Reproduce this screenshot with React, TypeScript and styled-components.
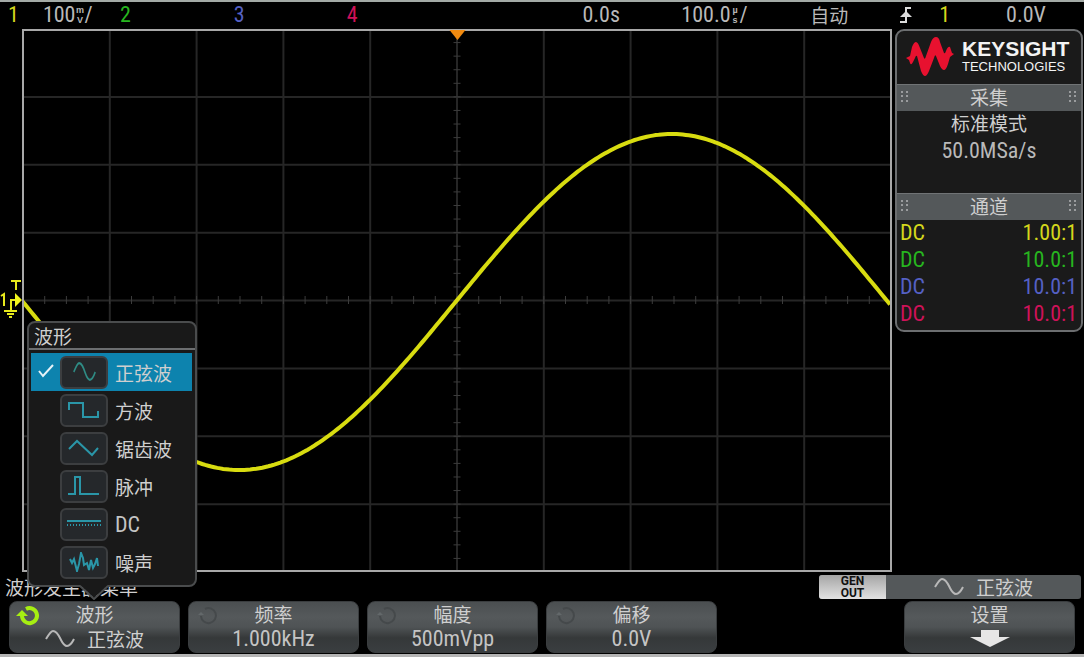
import React from 'react';
import styled, { createGlobalStyle } from 'styled-components';

const Global = createGlobalStyle`
  * { box-sizing: border-box; }
  body { margin: 0; background: #000; }
  button { font: inherit; color: inherit; cursor: pointer; }
`;

const YELLOW = '#d4d71c';
const GREEN = '#27b51f';
const BLUE = '#5560c4';
const PINK = '#cf1259';
const TEAL = '#2a96a8';

const Screen = styled.div`
  display: flex;
  flex-direction: column;
  height: 100vh;
  min-height: 600px;
  border-top: 2px solid #a3aaa6;
  border-bottom: 3px solid #b4b4b4;
  background: #000;
  color: #b9b9b9;
  font: 400 22px/25px 'Roboto Condensed', 'Noto Sans CJK SC', sans-serif;
`;

const Han = styled.span<{ $color?: string }>`
  font: 400 19px/23px 'Noto Sans CJK SC', sans-serif;
  color: ${(p) => p.$color ?? '#cfcfcf'};
  white-space: nowrap;
`;

const StatusBar = styled.header`
  display: grid;
  grid-template-columns: 112fr 114fr 113fr 236fr 99fr 129fr 90fr 184fr;
  align-items: center;
  height: 27px;
  padding: 0 0 6px 8px;
`;

const Cell = styled.div<{ $gap?: number }>`
  display: flex;
  align-items: center;
  gap: ${(p) => p.$gap ?? 0}px;
  min-width: 0;
`;

const Tint = styled.span<{ $color: string }>`
  color: ${(p) => p.$color};
`;

const Value = styled.span`
  display: flex;
  align-items: center;
  white-space: nowrap;
`;

const Unit = styled.span`
  display: flex;
  flex-direction: column;
  align-items: center;
  width: 9px;
  font: bold 9px/10px 'Liberation Sans', sans-serif;
`;

const Main = styled.main`
  display: flex;
  flex: 1 1 0;
  min-height: 0;
`;

const Gutter = styled.div`
  display: flex;
  align-items: center;
  width: 22px;
`;

const Plot = styled.svg`
  flex: 1;
  min-width: 0;
  height: auto;
`;

const Side = styled.aside`
  align-self: flex-start;
  width: 188px;
  margin: 0 1px 0 3px;
  border: 2px solid #6c6e70;
  border-radius: 9px;
  background: #1a1a1a;
  overflow: hidden;
`;

const Brand = styled.div`
  display: flex;
  align-items: center;
  gap: 8px;
  height: 53px;
  padding: 0 0 3px 9px;
  color: #f4f4f4;
`;

const BrandText = styled.div`
  display: flex;
  flex-direction: column;
  font-family: 'Liberation Sans', sans-serif;
`;

const BrandName = styled.span`
  font-size: 21px;
  font-weight: bold;
  line-height: 20px;
`;

const BrandSub = styled.span`
  font-size: 13px;
  line-height: 15px;
`;

const PanelHead = styled.h2`
  display: flex;
  align-items: center;
  justify-content: space-between;
  height: 27px;
  margin: 0;
  padding: 0 4px 3px;
  border-top: 1px solid #707375;
  background: #54585a;
`;

const Info = styled.div`
  display: flex;
  flex-direction: column;
  align-items: center;
  height: 82px;
`;

const Reading = styled.span`
  padding-top: 4px;
`;

const Channels = styled.table`
  width: 100%;
  margin-bottom: 2px;
  border-collapse: collapse;
`;

const ChannelRow = styled.tr<{ $color: string }>`
  color: ${(p) => p.$color};
  td { height: 27px; padding: 0 4px 2px 3px; }
  td + td { text-align: right; }
`;

const MenuLine = styled.div`
  display: flex;
  align-items: center;
  justify-content: space-between;
  height: 29px;
  padding: 0 3px 0 5px;
`;

const GenBar = styled.div`
  display: flex;
  width: 262px;
  height: 24px;
  border-radius: 3px;
  overflow: hidden;
  background: #54585a;
`;

const GenTag = styled.div`
  width: 67px;
  background: linear-gradient(#a5a5a5, #e2e2e2);
  color: #111;
  font: bold 12px/12px 'Roboto', sans-serif;
  text-align: center;
`;

const GenWave = styled.div`
  display: flex;
  flex: 1;
  align-items: center;
  justify-content: center;
  gap: 12px;
`;

const Keys = styled.nav`
  display: grid;
  grid-template-columns: repeat(6, minmax(0, 1fr));
  gap: 8px;
  padding: 0 9px 1px;
`;

const Slot = styled.div`
  position: relative;
`;

const SoftKey = styled.button`
  display: flex;
  flex-direction: column;
  align-items: center;
  position: relative;
  width: 100%;
  height: 52px;
  padding: 0;
  border: 1px solid #3a3d3f;
  border-radius: 8px;
  background: linear-gradient(#4b4f51, #55595b 30%, #4f5355 50%, #353839 72%, #3a3e40);
  color: #c4c4c4;
`;

const Knob = styled.svg`
  position: absolute;
  left: 6px;
  top: 2px;
`;

const KeyValue = styled.span`
  display: flex;
  align-items: center;
  gap: 12px;
  height: 27px;
`;

const Popup = styled.div`
  position: absolute;
  left: 18px;
  bottom: 66px;
  width: 170px;
  padding-bottom: 4px;
  border: 2px solid #4a4c4d;
  border-radius: 8px;
  background: #191919;
`;

const PopupTitle = styled.div`
  display: flex;
  align-items: center;
  height: 27px;
  padding-left: 5px;
  margin-bottom: 3px;
  border-bottom: 2px solid #6c6e70;
`;

const Pointer = styled.svg`
  position: absolute;
  left: 50px;
  top: 100%;
`;

const Option = styled.button<{ $on?: boolean }>`
  display: grid;
  grid-template-columns: 29px 48px 1fr;
  align-items: center;
  width: 161px;
  height: 38px;
  margin-left: 2px;
  padding: 0;
  border: 0;
  background: ${(p) => (p.$on ? '#0d83ae' : 'transparent')};
  color: #c4c4c4;
  text-align: left;
`;

const OptionIcon = styled.span`
  display: flex;
  align-items: center;
  justify-content: center;
  height: 33px;
  border: 2px solid #3c3e40;
  border-radius: 6px;
  background: #25282b;
`;

const OptionText = styled.span`
  display: flex;
  padding-left: 7px;
`;

const W = 869;
const H = 543;

const range = (n: number) => Array.from({ length: n }, (_, i) => i);

const wavePath = range(W / 3 + 1)
  .map((i) => {
    const x = i * 3;
    const y = 273 - 168 * Math.sin((2 * Math.PI * (x - 433)) / 864);
    return `${i ? 'L' : 'M'}${x} ${y.toFixed(1)}`;
  })
  .join('');

const Scope = () => (
  <Plot viewBox={`0 0 ${W} ${H}`} preserveAspectRatio="none" role="img" aria-label="CH1">
    <g stroke="#262626" strokeWidth="2">
      {range(9).map((i) => (
        <line key={i} x1={1 + ((i + 1) * 867) / 10} x2={1 + ((i + 1) * 867) / 10} y1="0" y2={H} />
      ))}
      {range(7).map((i) => (
        <line key={i} y1={((i + 1) * H) / 8} y2={((i + 1) * H) / 8} x1="0" x2={W} />
      ))}
    </g>
    <g stroke="#3c3c3c" strokeWidth="1">
      {range(39).map((i) => (
        <line key={i} x1={1 + ((i + 1) * 867) / 40} x2={1 + ((i + 1) * 867) / 40} y1="267" y2="275" />
      ))}
      {range(39).map((i) => (
        <line key={i} y1={((i + 1) * H) / 40} y2={((i + 1) * H) / 40} x1="431" x2="438" />
      ))}
    </g>
    <path d={wavePath} fill="none" stroke="#d8dc10" strokeWidth="4" />
    <rect x="1" y="1" width={W - 2} height={H - 2} fill="none" stroke="#a8a8a8" strokeWidth="2" />
    <path d="M427 1h16l-8 10z" fill="#f08a10" />
  </Plot>
);

const GroundMark = () => (
  <svg width="22" height="44" viewBox="0 0 22 44">
    <g fill="none" stroke="#e6e81c" strokeWidth="2">
      <path d="M11 2h10M16 2v9M16 21h-5v10M4 32h13M7 35h7M9 38h3M1 17l3-2v12" />
    </g>
    <path d="M15 14l7 7-7 7z" fill="#f2f51c" />
  </svg>
);

const Logo = () => (
  <svg width="48" height="40" viewBox="0 0 48 40" aria-hidden="true">
    <path
      d="M0 22L4 20L6 11Q8 6 10 6Q12 6 14 12L18 22Q19 24 20 20L25 6Q27 1 30 1Q33 1 34 6L38 17Q39 18 40 15Q42 10 44 11L46 17L48 18L44 21L42 28Q40 34 38 34Q36 34 34 30L30 20Q29 18 28 22L23 35Q21 40 19 40Q17 40 15 35L11 20Q10 19 9 22L7 26Q5 30 4 27L3 24z"
      fill="#e8112f"
    />
  </svg>
);

const Grip = () => (
  <svg width="8" height="12" viewBox="0 0 8 12" fill="#9a9c9e" aria-hidden="true">
    {[0, 5].map((x) => [0, 4, 9].map((y) => <rect key={`${x}-${y}`} x={x} y={y} width="2" height="2" />))}
  </svg>
);

const Sine = ({ color = '#b8b8b8', width = 30, height = 18 }) => (
  <svg width={width} height={height} viewBox="0 0 30 18" preserveAspectRatio="none" fill="none" stroke={color} strokeWidth="2">
    <path d="M1 9C4 4 6 1 8 1c4 0 6 5 8 9s4 6 6 6c3 0 5-3 7-7" />
  </svg>
);

const Turn = ({ active }: { active?: boolean }) => (
  <Knob width="26" height="24" viewBox="0 0 26 24" fill="none" aria-hidden="true">
    <path
      d="M10 5A7.500 7.500 0 1 1 6 12"
      stroke={active ? '#a6ee12' : '#45494b'}
      strokeWidth={active ? 4 : 2}
    />
    <path d={active ? 'M0 12h12L6 6z' : 'M3 11h6L6 8z'} fill={active ? '#a6ee12' : '#63686a'} />
  </Knob>
);

const shapes: Record<string, string> = {
  square: 'M2 10V3h14v14h15v-6',
  ramp: 'M2 11l8-8 15 14 6-7',
  pulse: 'M1 18h7V1h5v17h19',
  dc: 'M0 7h34',
  noise: 'M3 7l2 4 2-4 3 12 2-7 2-11 2 5 1 7 3-2 2 7 2-10 2 8 2-4 2-6 1 8',
};

const Shape = ({ kind }: { kind: string }) =>
  kind === 'sine' ? (
    <Sine color="#2f8c85" width={23} height={20} />
  ) : (
    <svg width="34" height="20" viewBox="0 0 34 20" fill="none" stroke={TEAL} strokeWidth="2">
      <path d={shapes[kind]} />
      {kind === 'dc' && <path d="M0 11h34" strokeDasharray="1 2" />}
    </svg>
  );

const options: [string, string][] = [
  ['sine', '正弦波'],
  ['square', '方波'],
  ['ramp', '锯齿波'],
  ['pulse', '脉冲'],
  ['dc', 'DC'],
  ['noise', '噪声'],
];

const WaveMenu = () => (
  <Popup role="menu" aria-label="波形">
    <PopupTitle><Han>波形</Han></PopupTitle>
    {options.map(([kind, name], i) => (
      <Option key={kind} $on={i === 0} role="menuitemradio" aria-checked={i === 0}>
        <span>
          {i === 0 && (
            <svg width="29" height="20" viewBox="0 0 29 20" fill="none" stroke="#e6f2f7" strokeWidth="2">
              <path d="M8 11l4 5 10-11" />
            </svg>
          )}
        </span>
        <OptionIcon><Shape kind={kind} /></OptionIcon>
        <OptionText>{kind === 'dc' ? name : <Han>{name}</Han>}</OptionText>
      </Option>
    ))}
    <Pointer width="30" height="15" viewBox="0 0 30 15">
      <path d="M1 0l14 13L29 0z" fill="#191919" />
      <path d="M1 1l14 13L29 1" fill="none" stroke="#4a4c4d" strokeWidth="2" />
    </Pointer>
  </Popup>
);

const channels: [string, string][] = [
  [YELLOW, '1.00:1'],
  [GREEN, '10.0:1'],
  [BLUE, '10.0:1'],
  [PINK, '10.0:1'],
];

const Head = ({ children }: { children: React.ReactNode }) => (
  <PanelHead><Grip /><Han>{children}</Han><Grip /></PanelHead>
);

export default function App() {
  return (
    <Screen>
      <Global />
      <StatusBar>
        <Cell $gap={24}>
          <Tint $color={YELLOW}>1</Tint>
          <Value>100<Unit><span>m</span><span>V</span></Unit>/</Value>
        </Cell>
        <Cell><Tint $color={GREEN}>2</Tint></Cell>
        <Cell><Tint $color={BLUE}>3</Tint></Cell>
        <Cell><Tint $color={PINK}>4</Tint></Cell>
        <Cell>0.0s</Cell>
        <Cell><Value>100.0<Unit><span>µ</span><span>s</span></Unit>/</Value></Cell>
        <Cell><Han $color="#b9b9b9">自动</Han></Cell>
        <Cell $gap={27}>
          <svg width="12" height="18" viewBox="0 0 12 18" aria-hidden="true">
            <path d="M0 16h6V2h5" fill="none" stroke="#dcdcdc" strokeWidth="2" />
            <path d="M0 11l6-6 6 6z" fill="#dcdcdc" />
          </svg>
          <Cell $gap={56}><Tint $color={YELLOW}>1</Tint><span>0.0V</span></Cell>
        </Cell>
      </StatusBar>

      <Main>
        <Gutter><GroundMark /></Gutter>
        <Scope />
        <Side>
          <Brand>
            <Logo />
            <BrandText>
              <BrandName>KEYSIGHT</BrandName>
              <BrandSub>TECHNOLOGIES</BrandSub>
            </BrandText>
          </Brand>
          <Head>采集</Head>
          <Info>
            <Han>标准模式</Han>
            <Reading>50.0MSa/s</Reading>
          </Info>
          <Head>通道</Head>
          <Channels>
            <tbody>
              {channels.map(([color, ratio]) => (
                <ChannelRow key={color} $color={color}>
                  <td>DC</td>
                  <td>{ratio}</td>
                </ChannelRow>
              ))}
            </tbody>
          </Channels>
        </Side>
      </Main>

      <MenuLine>
        <Han>波形发生器菜单</Han>
        <GenBar>
          <GenTag>GEN<br />OUT</GenTag>
          <GenWave><Sine /><Han>正弦波</Han></GenWave>
        </GenBar>
      </MenuLine>

      <Keys>
        <Slot>
          <SoftKey>
            <Turn active />
            <Han>波形</Han>
            <KeyValue><Sine /><Han>正弦波</Han></KeyValue>
          </SoftKey>
          <WaveMenu />
        </Slot>
        <SoftKey><Turn /><Han>频率</Han><KeyValue>1.000kHz</KeyValue></SoftKey>
        <SoftKey><Turn /><Han>幅度</Han><KeyValue>500mVpp</KeyValue></SoftKey>
        <SoftKey><Turn /><Han>偏移</Han><KeyValue>0.0V</KeyValue></SoftKey>
        <Slot />
        <SoftKey>
          <Han>设置</Han>
          <KeyValue>
            <svg width="40" height="17" viewBox="0 0 40 17" aria-hidden="true">
              <path d="M11 0h18v7h11L20 17 0 7h11z" fill="#e6e6e6" />
            </svg>
          </KeyValue>
        </SoftKey>
      </Keys>
    </Screen>
  );
}
